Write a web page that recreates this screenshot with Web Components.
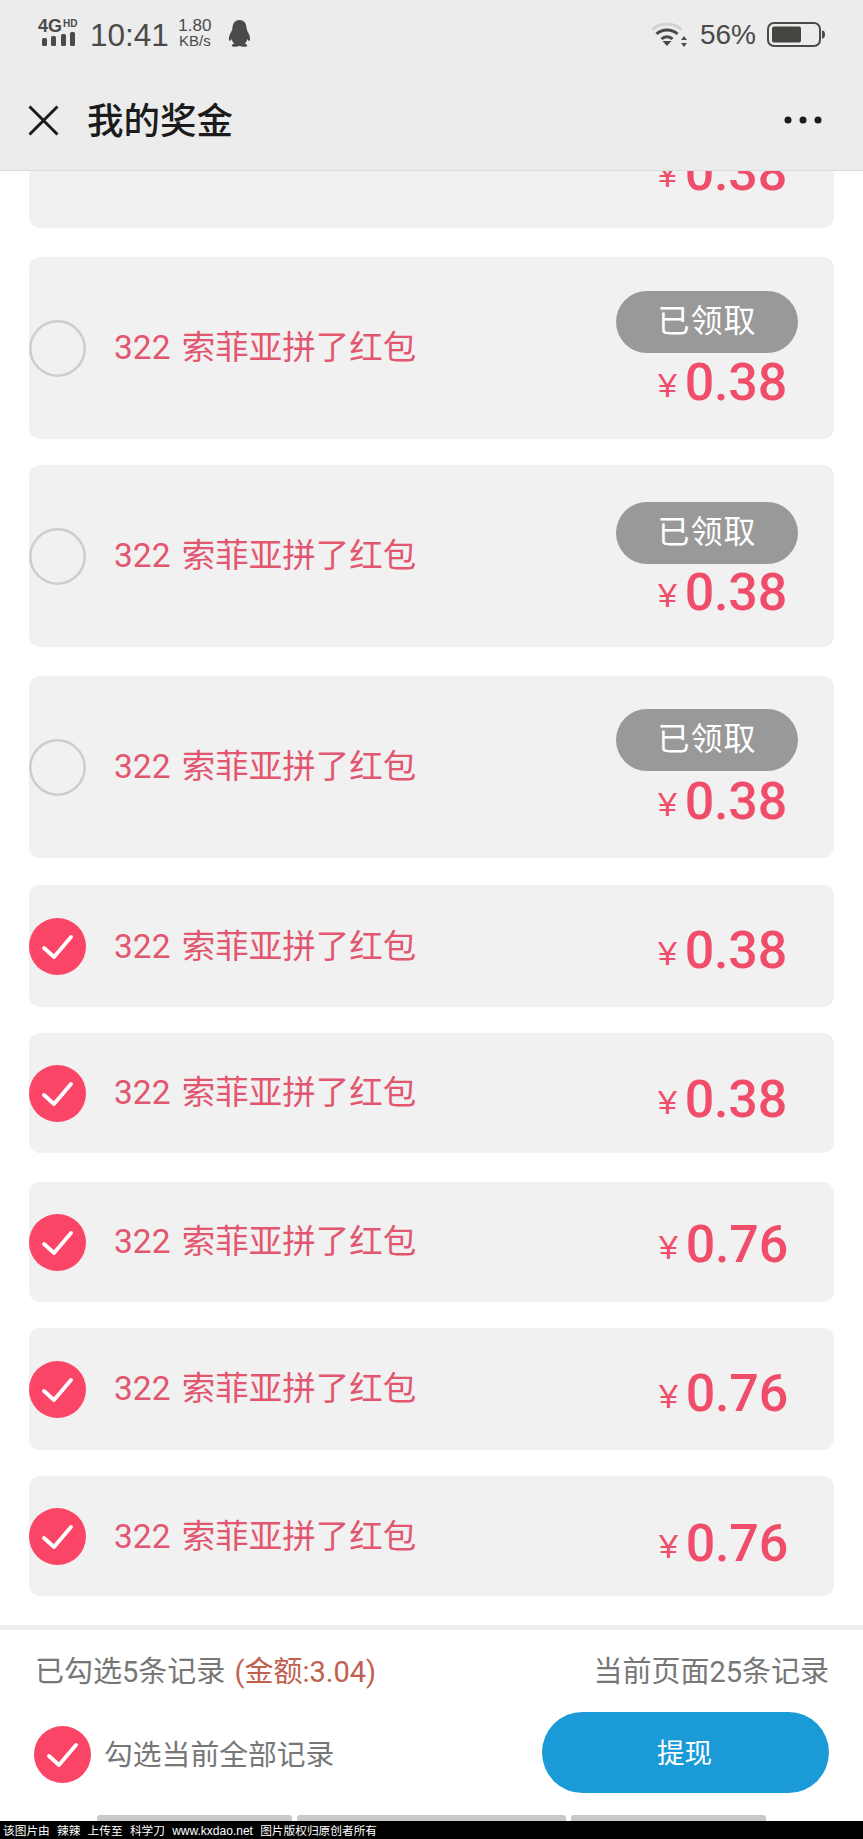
<!DOCTYPE html>
<html lang="zh-CN">
<head>
<meta charset="utf-8">
<title>我的奖金</title>
<style>
html,body{margin:0;padding:0;background:#fff}
body{width:863px;height:1839px;overflow:hidden;font-family:"Liberation Sans","Noto Sans CJK SC",sans-serif}
</style>
</head>
<body>
<bonus-page>
  <status-bar slot="top"></status-bar>
  <nav-bar slot="top" heading="我的奖金"></nav-bar>
  <reward-card slot="list" amount="0.38" bare style="--h:57px;--mt:0px;--top:-32px;--r:0 0 11px 11px"></reward-card>
  <reward-card slot="list" amount="0.38" claimed style="--h:182px;--mt:29px;--top:34px">322 索菲亚拼了红包</reward-card>
  <reward-card slot="list" amount="0.38" claimed style="--h:182px;--mt:26px;--top:37px;--ay:3px">322 索菲亚拼了红包</reward-card>
  <reward-card slot="list" amount="0.38" claimed style="--h:182px;--mt:29px;--top:33px;--ay:5px">322 索菲亚拼了红包</reward-card>
  <reward-card slot="list" amount="0.38" checked style="--h:122px;--mt:27px;--top:32px;--ny:1px">322 索菲亚拼了红包</reward-card>
  <reward-card slot="list" amount="0.38" checked style="--h:120px;--mt:26px;--top:33px">322 索菲亚拼了红包</reward-card>
  <reward-card slot="list" amount="0.76" checked style="--h:120px;--mt:29px;--top:29px;--rp:10px">322 索菲亚拼了红包</reward-card>
  <reward-card slot="list" amount="0.76" checked style="--h:122px;--mt:26px;--top:32px;--rp:10px">322 索菲亚拼了红包</reward-card>
  <reward-card slot="list" amount="0.76" checked style="--h:120px;--mt:26px;--top:33.500px;--rp:10px;--ny:1px">322 索菲亚拼了红包</reward-card>
  <withdraw-footer slot="bottom"></withdraw-footer>
  <tab-stubs slot="bottom"></tab-stubs>
  <watermark-bar slot="bottom"></watermark-bar>
</bonus-page>
<script>
function def(name,html){
  customElements.define(name,class extends HTMLElement{
    constructor(){super();this.attachShadow({mode:'open'});if(typeof html!=='function')this.shadowRoot.innerHTML=html;}
    connectedCallback(){if(typeof html==='function')this.shadowRoot.innerHTML=html(this);}
  });
}
def('bonus-page',`<style>
:host{display:flex;flex-direction:column;width:863px;height:1839px;overflow:hidden}
.top{position:relative;z-index:2;flex:none}
.list{flex:1;min-height:0;overflow:hidden;display:flex;flex-direction:column}
.bottom{flex:none}
</style>
<div class="top"><slot name="top"></slot></div>
<div class="list"><slot name="list"></slot></div>
<div class="bottom"><slot name="bottom"></slot></div>`);

def('status-bar',`<style>
:host{display:flex;align-items:flex-start;height:70px;background:#ececec;color:#4a4a4a;font-family:"Liberation Sans",sans-serif;box-sizing:border-box;padding:0 38px 0 38px}
svg{display:block;flex:none;overflow:visible}
.net{margin-top:19px}
.time{font-size:31.500px;line-height:36px;margin:17px 0 0 8px}
.speed{margin:18px 0 0 8px;width:36px;font-size:17px;line-height:16px;text-align:center}
.speed div+div{font-size:15px;line-height:14px}
.peng{margin:20px 0 0 15px}
.sp{flex:1}
.pct{font-size:28px;line-height:32px;margin:19px 0 0 12px}
.wifi{margin-top:20px}
.bat{margin:22px 0 0 11px}
</style>
<svg class="net" width="44" height="28" viewBox="0 0 44 28" fill="#4a4a4a">
<text x="0" y="13" font-family="Liberation Sans" font-weight="700" font-size="18">4G</text>
<text x="25" y="8" font-family="Liberation Sans" font-weight="700" font-size="10">HD</text>
<rect x="4" y="19" width="5" height="8" rx="1.500"/><rect x="13" y="17" width="5" height="10" rx="1.500"/><rect x="23" y="15" width="5" height="12" rx="1.500"/><rect x="32" y="13" width="5" height="14" rx="1.500"/>
</svg>
<div class="time">10:41</div>
<div class="speed"><div>1.80</div><div>KB/s</div></div>
<svg class="peng" width="23" height="27" viewBox="0 0 23 27" fill="#4a4a4a"><path d="M11.500 0C6.500 0 4.600 4 4.400 8.200 4.200 10 3.600 11 2.800 12.600 1.200 15.600.4 18.800 1.200 20.600c.6.900 1.600-.1 2.400-1.600.4 1.800 1.300 3.200 2.600 4.400-1.600.6-2.600 1.400-2.400 2.400.3 1.100 3.200 1.200 5.200.8 1-.2 1.600-.5 2.500-.5s1.500.3 2.500.5c2 .4 4.900.3 5.200-.8.2-1-.8-1.800-2.400-2.400 1.300-1.200 2.200-2.600 2.600-4.400.8 1.500 1.800 2.500 2.400 1.600.8-1.800 0-5-1.600-8-.8-1.600-1.400-2.600-1.600-4.400C18.400 4 16.500 0 11.500 0Z"/></svg>
<div class="sp"></div>
<svg class="wifi" width="37" height="27" viewBox="0 0 37 27" fill="none"><path d="M1.500 9.500C8.500 2 22.500 2 30.500 9.500" stroke="#d2d2d2" stroke-width="3"/><path d="M5.500 14C11 8.500 21 8.500 26.500 14" stroke="#4a4a4a" stroke-width="3"/><path d="M10.500 19c3-3 8-3 11 0" stroke="#4a4a4a" stroke-width="3"/><path d="M11.500 21h9L16 26Z" fill="#4a4a4a"/><path d="M33 16l3 4h-6ZM33 27l3-4h-6Z" fill="#4a4a4a"/></svg>
<div class="pct">56%</div>
<svg class="bat" width="58" height="25" viewBox="0 0 58 25" fill="none"><rect x="1" y="1" width="52" height="23" rx="6" stroke="#4a4a4a" stroke-width="2"/><rect x="5" y="4.500" width="29" height="16" rx="2" fill="#45453f"/><path d="M55 8.500c2 0 3 1.500 3 4s-1 4-3 4Z" fill="#4a4a4a"/></svg>`);

def('nav-bar',el=>`<style>
:host{display:flex;align-items:center;height:101px;box-sizing:border-box;background:#ececec;border-bottom:1px solid #dcdcdc;padding:0 41px 0 28px}
svg{display:block;flex:none}
h1{flex:1;margin:0 0 0 28px;font:500 36.500px/46px "Noto Sans CJK SC",sans-serif;color:#1b1b1b;padding-bottom:3px}
</style>
<svg width="31" height="31" viewBox="0 0 31 31" stroke="#1b1b1b" stroke-width="3"><path d="M1.500 1.500 29.500 29.500M29.500 1.500 1.500 29.500"/></svg>
<h1>${el.getAttribute('heading')}</h1>
<svg width="38" height="8" viewBox="0 0 38 8" fill="#1b1b1b"><circle cx="4" cy="4" r="3.500"/><circle cx="19" cy="4" r="3.500"/><circle cx="34" cy="4" r="3.500"/></svg>`);

def('check-mark',el=>`<style>
:host{display:block;width:57px;height:57px;flex:none}
svg{display:block}
</style>
${el.hasAttribute('on')
 ?`<svg width="57" height="57" viewBox="0 0 57 57"><circle cx="28.500" cy="28.500" r="28.500" fill="#fb4567"/><path d="M15 30 25 39 42 19" fill="none" stroke="#fff" stroke-width="3.800" stroke-linecap="round" stroke-linejoin="round"/></svg>`
 :`<svg width="57" height="57" viewBox="0 0 57 57"><circle cx="28.500" cy="28.500" r="27.200" fill="none" stroke="#cdcdcd" stroke-width="2.500"/></svg>`}`);

def('reward-card',el=>{
 const claimed=el.hasAttribute('claimed'), bare=el.hasAttribute('bare');
 return `<style>
:host{display:flex;flex:none;align-items:center;justify-content:flex-end;box-sizing:border-box;width:805px;height:var(--h);margin:var(--mt) 0 0 29px;background:#f1f1f1;border-radius:var(--r,11px);padding-right:36px}
.name{flex:1;margin-left:28px;margin-top:var(--ny,0px);font:33.500px/44px "Roboto","Noto Sans CJK SC",sans-serif;color:#e2566f;word-spacing:3px}
.col{flex:none;align-self:flex-start;margin-top:var(--top);width:182px;display:flex;flex-direction:column;align-items:stretch}
.badge{height:62px;border-radius:31px;background:#999;color:#fff;text-align:center;font:32px/54px "Noto Sans CJK SC",sans-serif;letter-spacing:1px}
.amt{display:flex;justify-content:flex-end;align-items:baseline;padding:8px var(--rp,11px) 0 0;color:#f04d6a;font:500 52px/52px "Roboto",sans-serif;letter-spacing:-.2px}
.col.pill .amt{padding-top:var(--ay,4px)}
.y{font:400 34px/52px "Liberation Sans","Noto Sans CJK SC",sans-serif;margin-right:8px;position:relative;top:-3px}
</style>
${bare?'':`<check-mark ${el.hasAttribute('checked')?'on':''}></check-mark>
<div class="name"><slot></slot></div>`}
<div class="col ${claimed?'pill':''}">
${claimed?'<div class="badge">已领取</div>':''}
<div class="amt"><span class="y">¥</span><span>${el.getAttribute('amount')}</span></div>
</div>`;});

def('withdraw-footer',`<style>
:host{display:block;height:194px;box-sizing:border-box;border-top:5px solid #eeeeee;padding:22px 34px 0 35px;background:#fff;font:29px/40px "Roboto","Noto Sans CJK SC",sans-serif;color:#777}
.row{display:flex;justify-content:space-between;align-items:center}
.row+.row{margin-top:20px;margin-left:-1px}
.tot{color:#c0604f;margin-left:2px}
.left{display:flex;align-items:center;gap:13px;margin-top:4px;font-size:28.800px}
.btn{width:287px;height:81px;border-radius:41px;background:#1a9bd7;color:#fff;text-align:center;font-size:27.500px;line-height:84px}
.b{padding-right:2px}
</style>
<div class="row"><span>已勾选5条记录 <span class="tot">(金额:3.04)</span></span><span>当前页面25条记录</span></div>
<div class="row"><div class="left"><check-mark on></check-mark><span>勾选当前全部记录</span></div><div class="btn"><span class="b">提现</span></div></div>`);

def('tab-stubs',`<style>
:host{display:flex;gap:5px;height:6px;padding-left:97px;margin-top:-4px}
i{display:block;height:6px;background:#c8c8c8;border-radius:3px 3px 0 0}
</style><i style="width:195px"></i><i style="width:269px"></i><i style="width:195px"></i>`);

def('watermark-bar',`<style>
:host{display:block;height:18px;background:#000;color:#fff;font:11.700px/18px "Noto Sans CJK SC",sans-serif;padding-left:3px;white-space:pre;overflow:hidden;word-spacing:1px}
.w{font-family:"Liberation Sans",sans-serif;font-size:12px}
</style>该图片由  辣辣  上传至  科学刀  <span class="w">www.kxdao.net</span>  图片版权归原创者所有`);
</script>
</body>
</html>
